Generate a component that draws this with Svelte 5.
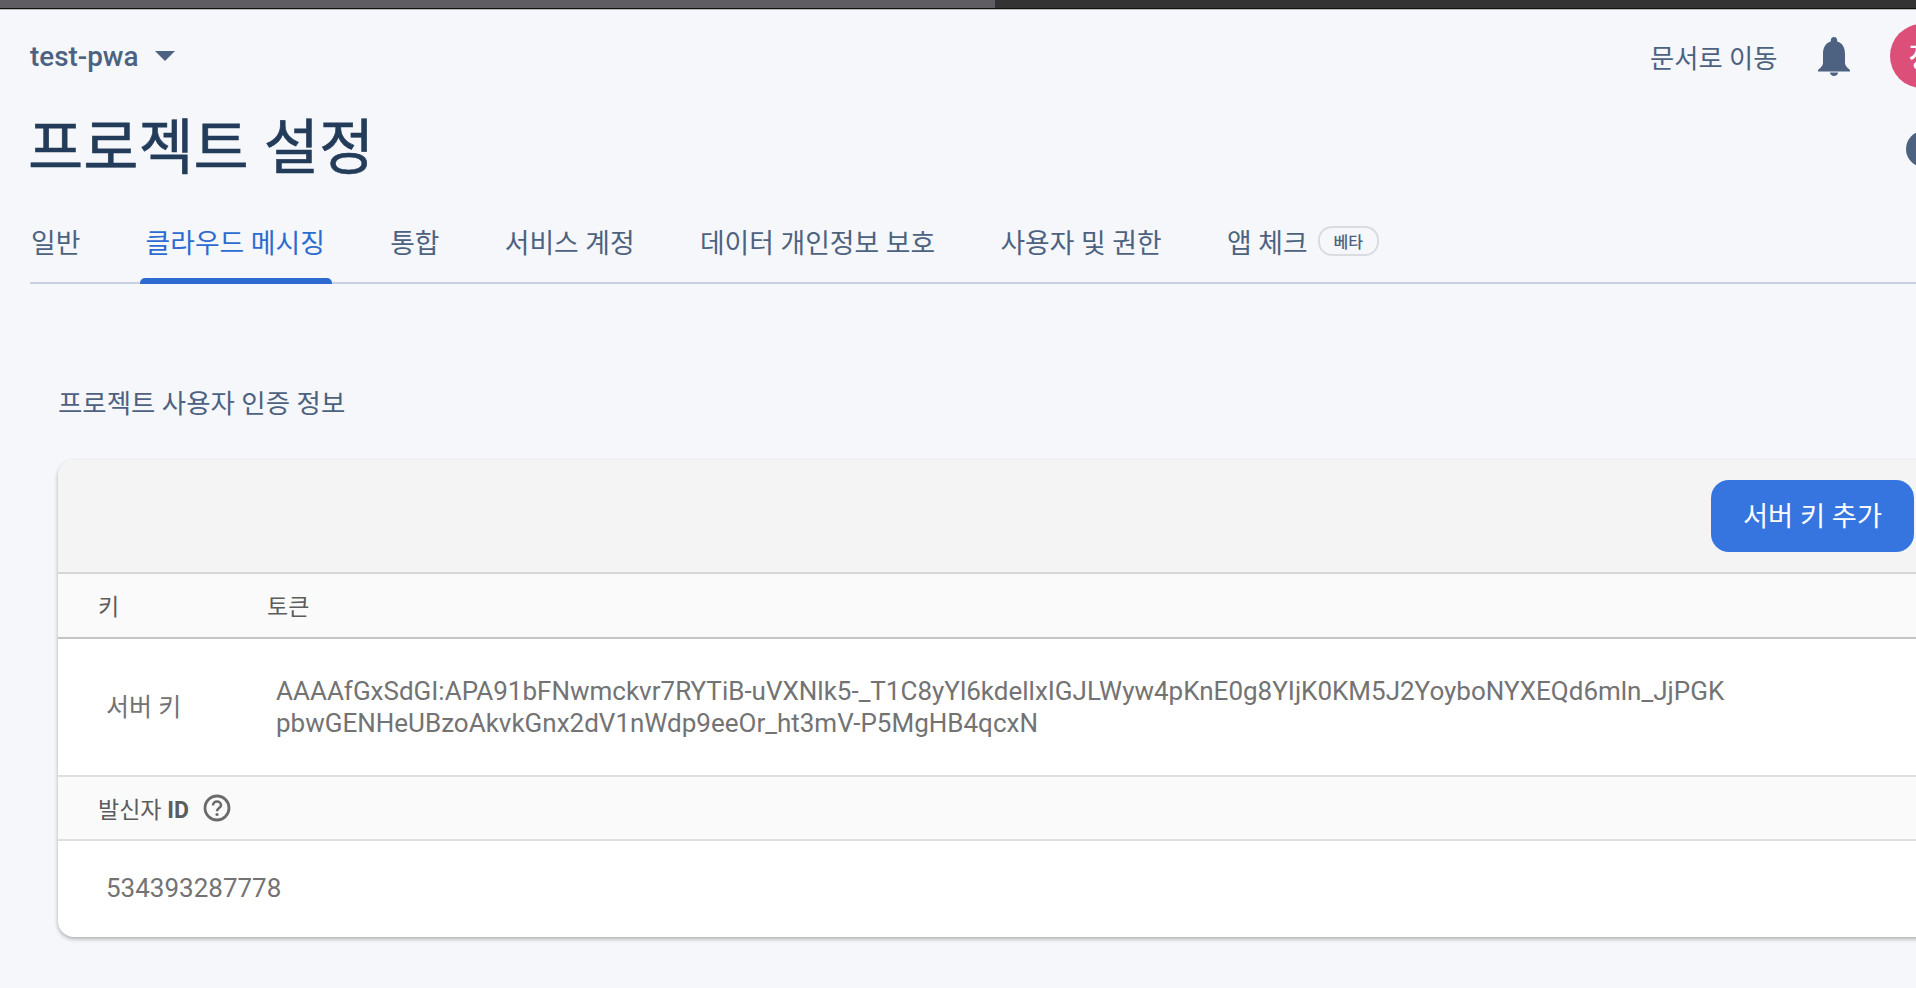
<script>
  const tabs = [
    { label: '일반' },
    { label: '클라우드 메시징', active: true },
    { label: '통합' },
    { label: '서비스 계정' },
    { label: '데이터 개인정보 보호' },
    { label: '사용자 및 권한' },
    { label: '앱 체크', beta: true }
  ];
</script>

<div class="page">
  <div class="chrome">
    <div class="chrome-left"></div>
    <div class="chrome-right"></div>
  </div>

  <header class="top">
    <div class="project">
      <span>test-pwa</span>
      <svg class="caret" width="20" height="10" viewBox="0 0 20 10"><path d="M0 0h20L10 10z" /></svg>
    </div>
    <div class="top-right">
      <span class="docs">문서로 이동</span>
      <svg class="bell" width="32" height="39" viewBox="0 0 32 39">
        <path d="M16 0c-2 0-3.200 1.500-3.200 3.400v1.100C7.200 6.200 5 11 5 17v8.500c0 2-.8 3.500-2.200 5L0 33v1.500h32V33l-2.800-2.500c-1.400-1.500-2.200-3-2.200-5V17c0-6-2.200-10.800-7.800-12.500V3.400C19.200 1.500 18 0 16 0z" />
        <path d="M12 35.500h8c0 2-1.800 3.500-4 3.500s-4-1.500-4-3.500z" />
      </svg>
      <div class="avatar">정</div>
    </div>
  </header>

  <div class="title-row">
    <h1>프로젝트 설정</h1>
    <div class="help-dot"></div>
  </div>

  <nav class="tabs">
    {#each tabs as tab}
      <div class="tab" class:active={tab.active}>
        <span>{tab.label}</span>
        {#if tab.beta}<span class="beta">베타</span>{/if}
      </div>
    {/each}
  </nav>

  <h2>프로젝트 사용자 인증 정보</h2>

  <section class="card">
    <div class="toolbar">
      <button>서버 키 추가</button>
    </div>
    <div class="thead">
      <div class="col-key">키</div>
      <div>토큰</div>
    </div>
    <div class="row">
      <div class="cell-key">서버 키</div>
      <div class="cell-token">AAAAfGxSdGI:APA91bFNwmckvr7RYTiB-uVXNlk5-_T1C8yYl6kdellxIGJLWyw4pKnE0g8YIjK0KM5J2YoyboNYXEQd6mln_JjPGK<br />pbwGENHeUBzoAkvkGnx2dV1nWdp9eeOr_ht3mV-P5MgHB4qcxN</div>
    </div>
    <div class="sender-head">
      <span>발신자 <b>ID</b></span>
      <svg width="28" height="28" viewBox="0 0 28 28" fill="none">
        <circle cx="14" cy="14" r="12" stroke="#6b6b6b" stroke-width="2.800" />
        <path d="M10 11.500c0-2.300 1.800-4 4-4s4 1.600 4 3.700c0 2.800-4 3-4 6" stroke="#6b6b6b" stroke-width="2.500" />
        <circle cx="14" cy="20.500" r="1.600" fill="#6b6b6b" />
      </svg>
    </div>
    <div class="sender-value">534393287778</div>
  </section>
</div>

<style>
  :global(body) {
    margin: 0;
    background: #f5f7fa;
    overflow: hidden;
  }
  .page {
    width: 1916px;
    height: 988px;
    overflow: hidden;
    background: #f5f7fa;
    font-family: Roboto, "Noto Sans CJK KR", sans-serif;
    color: #4d6280;
  }
  .chrome {
    display: flex;
    height: 9px;
    border-bottom: 1px solid #b8bbbd;
  }
  .chrome-left {
    width: 995px;
    background: #5f5d61;
    border-bottom: 1px solid #111;
  }
  .chrome-right {
    flex: 1;
    background: #333;
    border-bottom: 1px solid #111;
  }
  .top {
    display: flex;
    justify-content: space-between;
    align-items: center;
    height: 64px;
    margin-top: 14px;
    padding-left: 30px;
  }
  .project {
    display: flex;
    align-items: center;
    gap: 17px;
    font-size: 27.800px;
    font-weight: 500;
  }
  .caret path, .bell path {
    fill: #4d6280;
  }
  .top-right {
    display: flex;
    align-items: center;
    flex: none;
    width: 266px;
  }
  .docs {
    font-size: 26.300px;
    white-space: nowrap;
    flex: none;
  }
  .bell {
    margin-left: 40px;
    flex: none;
  }
  .avatar {
    flex: none;
    width: 64px;
    height: 64px;
    margin-left: 40px;
    border-radius: 50%;
    background: #dc4f79;
    color: #fff;
    font-size: 28px;
    font-weight: 500;
    display: flex;
    align-items: center;
    justify-content: center;
  }
  .title-row {
    display: flex;
    justify-content: space-between;
    align-items: center;
    padding-left: 28px;
    margin-top: 23px;
  }
  h1 {
    margin: 0;
    font-size: 60px;
    font-weight: 400;
    line-height: 76px;
    color: #233c5a;
    -webkit-text-stroke: .6px #233c5a;
  }
  .help-dot {
    width: 36px;
    height: 36px;
    border-radius: 50%;
    background: #4d6280;
    margin-right: -26px;
  }
  .tabs {
    display: flex;
    margin: 23px 0 0 30px;
    height: 72px;
    border-bottom: 2px solid #c6d0de;
    font-size: 26.800px;
  }
  .tab {
    display: flex;
    align-items: center;
    gap: 10px;
    padding: 0 3px 10px 1px;
    margin-right: 61.300px;
    position: relative;
    white-space: nowrap;
  }
  .tab.active {
    color: #2d6bd0;
  }
  .tab.active::after {
    content: "";
    position: absolute;
    left: -5px;
    right: -4px;
    bottom: -2px;
    height: 6px;
    background: #2d6bd0;
    border-radius: 5px 5px 0 0;
  }
  .beta {
    font-size: 16px;
    font-weight: 500;
    padding: 1px 14px;
    border: 2px solid #d9dce1;
    border-radius: 14px;
  }
  h2 {
    margin: 102px 0 0 58px;
    font-size: 26.450px;
    font-weight: 400;
    line-height: 36px;
  }
  .card {
    margin: 38px -200px 0 58px;
    border-radius: 16px;
    background: #fff;
    overflow: hidden;
    box-shadow: 0 2px 4px rgba(0, 0, 0, .3);
    color: #737373;
    font-size: 26px;
  }
  .toolbar {
    height: 112px;
    background: #f4f4f5;
    padding-left: 1653px;
    display: flex;
    align-items: center;
    border-bottom: 2px solid #d6d6d6;
  }
  button {
    width: 203px;
    height: 72px;
    border: 0;
    border-radius: 18px;
    background: #3674e0;
    color: #fff;
    font: inherit;
    font-size: 27.300px;
    padding: 0 0 4px;
  }
  .thead {
    display: flex;
    align-items: center;
    height: 61px;
    padding-left: 40px;
    padding-bottom: 2px;
    background: #fafafa;
    border-bottom: 2px solid #c4c4c4;
    color: #5c5c5c;
    font-size: 23px;
  }
  .col-key {
    width: 169px;
  }
  .row {
    display: flex;
    align-items: center;
    height: 136px;
    padding-left: 48px;
    border-bottom: 2px solid #dedede;
  }
  .cell-key {
    width: 170px;
    font-size: 25px;
    padding-bottom: 4px;
  }
  .cell-token {
    line-height: 32px;
    white-space: nowrap;
  }
  .sender-head {
    display: flex;
    align-items: center;
    gap: 14px;
    height: 62px;
    padding-left: 40px;
    background: #fafafa;
    border-bottom: 2px solid #dedede;
    color: #5c5c5c;
    font-size: 23px;
  }
  .sender-value {
    height: 94px;
    padding-bottom: 2px;
    display: flex;
    align-items: center;
    padding-left: 48px;
  }
</style>
